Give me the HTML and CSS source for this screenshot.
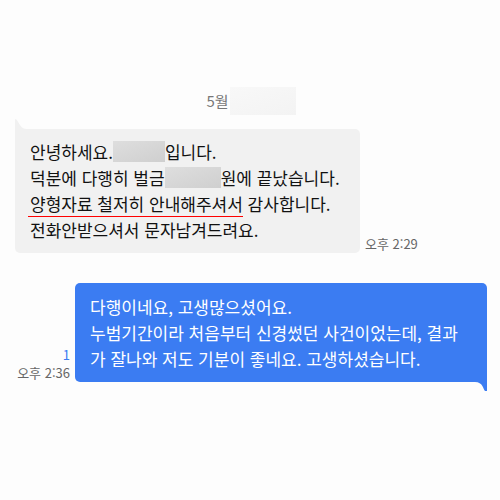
FILE: index.html
```
<!DOCTYPE html>
<html lang="ko">
<head>
<meta charset="utf-8">
<meta name="viewport" content="width=device-width, initial-scale=1">
<title>대화</title>
<link rel="stylesheet" href="styles.css">
</head>
<body>
<main class="chat">
  <div class="date">5월<span class="date-mask"></span></div>
  <section class="message received">
    <div class="bubble">
      <svg class="tail" width="12" height="11" viewBox="0 0 12 11" aria-hidden="true"><path d="M0 11V0C2 0 3 3 5 6C7 9 9 10 12 10V11Z"/></svg>
      <p>안녕하세요.<span class="mask name"></span>입니다.</p>
      <p>덕분에 다행히 벌금<span class="mask amount"></span>원에 끝났습니다.</p>
      <p><span class="marked">양형자료 철저히 안내해주셔서</span> 감사합니다.</p>
      <p>전화안받으셔서 문자남겨드려요.</p>
    </div>
    <div class="meta"><time>오후 2:29</time></div>
  </section>
  <section class="message sent">
    <div class="meta"><span class="unread">1</span><time>오후 2:36</time></div>
    <div class="bubble">
      <p>다행이네요, 고생많으셨어요.</p>
      <p>누범기간이라 처음부터 신경썼던 사건이었는데, 결과가 잘나와 저도 기분이 좋네요. 고생하셨습니다.</p>
      <svg class="tail" width="12" height="10" viewBox="0 0 12 10" aria-hidden="true"><path d="M12 0V10H10C8 8 8 1 0 1V0Z"/></svg>
    </div>
  </section>
</main>
</body>
</html>
```
FILE: styles.css
```
* {
  box-sizing: border-box;
}

body {
  margin: 0;
  background: #fdfdfd;
  color: #111;
  font-family: "Noto Sans CJK KR", sans-serif;
  font-size: 17px;
  line-height: 26px;
}

p {
  margin: 0;
}

.chat {
  min-height: 100vh;
  padding: 87px 13px 30px 15px;
}

.date {
  display: flex;
  justify-content: center;
  align-items: center;
  height: 28px;
  margin-bottom: 14px;
  color: #777;
  font-size: 15px;
}

.date-mask {
  width: 66px;
  height: 28px;
  margin-left: 1px;
  background: linear-gradient(160deg, #f8f8f8, #f3f3f3);
}

.message {
  display: flex;
  align-items: flex-end;
  gap: 5px;
}

.bubble {
  position: relative;
  padding: 10px 15px;
  border-radius: 5px;
}

.received .bubble {
  min-width: 345px;
  border-top-left-radius: 0;
  background: #f1f1f1;
}

.sent {
  margin-top: 30px;
}

.sent .bubble {
  flex: 1;
  padding-top: 11px;
  border-bottom-right-radius: 0;
  background: #3b7cf2;
  color: #fff;
}

.tail {
  position: absolute;
}

.received .tail {
  left: 0;
  bottom: 100%;
  margin-bottom: -1px;
  fill: #f1f1f1;
}

.sent .tail {
  right: 0;
  top: 100%;
  margin-top: -1px;
  fill: #3b7cf2;
}

.mask {
  display: inline-block;
  height: 21px;
  vertical-align: -3px;
  background: linear-gradient(160deg, #dedede, #cfcfcf);
}

.name {
  width: 52px;
}

.amount {
  width: 56px;
}

.marked {
  position: relative;
}

.marked::after {
  content: "";
  position: absolute;
  right: 0;
  bottom: -1px;
  left: -2px;
  height: 1px;
  background: #f00;
}

.meta {
  display: flex;
  flex-direction: column;
  flex: none;
  color: #666;
  font-size: 13px;
  line-height: 18px;
}

.sent .meta {
  width: 55px;
  align-items: flex-end;
}

.unread {
  color: #3b7cf2;
}
```
